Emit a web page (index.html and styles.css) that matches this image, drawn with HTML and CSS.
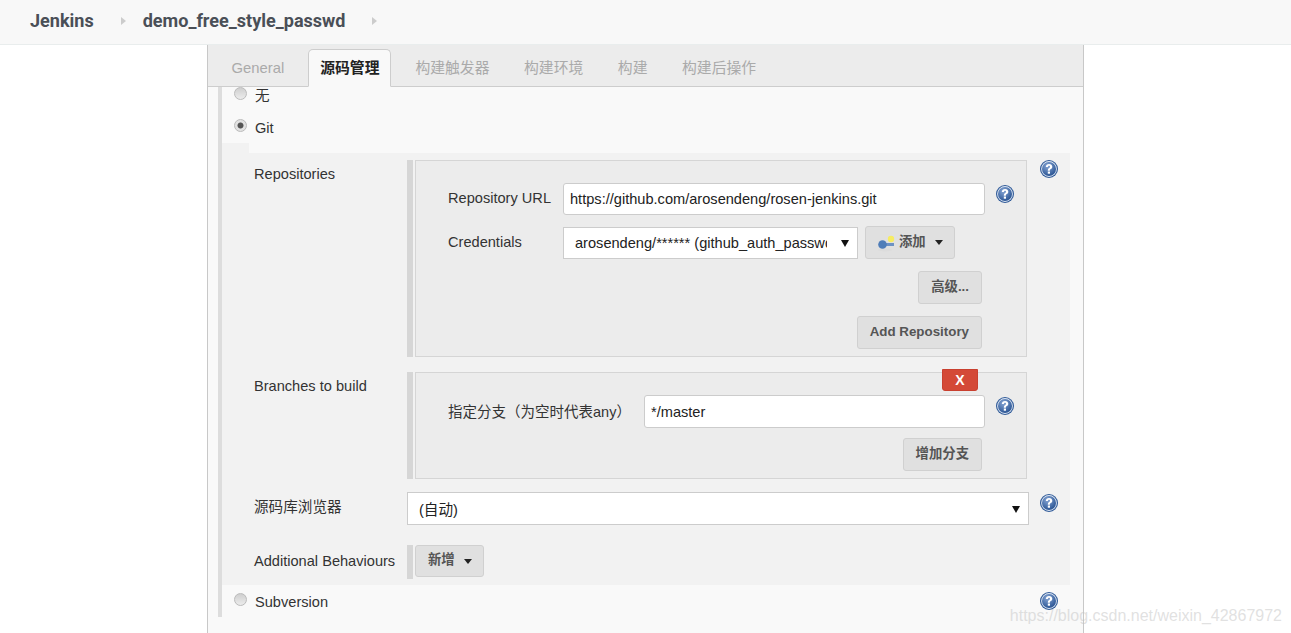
FILE: index.html
```html
<!DOCTYPE html>
<html lang="zh">
<head>
  <meta charset="UTF-8" />
  <title>demo_free_style_passwd Config [Jenkins]</title>
  <link rel="stylesheet" href="styles.css">
</head>
<body>

<svg class="defs" width="0" height="0">
  <defs>
    <radialGradient id="helpFill" cx="40%" cy="30%" r="80%">
      <stop offset="0" stop-color="#86a5d4"/>
      <stop offset="1" stop-color="#1f4b8c"/>
    </radialGradient>
    <symbol id="help" viewBox="0 0 18 18">
      <circle cx="9" cy="9" r="9" fill="#2f5a98"/>
      <circle cx="9" cy="9" r="7.9" fill="#dfe7f3"/>
      <circle cx="9" cy="9" r="7" fill="url(#helpFill)"/>
      <path d="M5.8 7c.1-2 1.4-3.1 3.3-3.1s3.2 1.1 3.2 2.8c0 1.2-.7 1.8-1.5 2.4-.7.5-.9.8-.9 1.6H7.8c0-1.4.4-2.1 1.3-2.7.6-.4.9-.7.9-1.2 0-.6-.4-1-1-1-.7 0-1.1.4-1.1 1.2z" fill="#fff"/>
      <rect x="7.8" y="11.5" width="2.2" height="2.2" fill="#fff"/>
    </symbol>
  </defs>
</svg>

<header class="topbar">
  <a class="crumb">Jenkins</a>
  <span class="crumb-arrow"></span>
  <a class="crumb">demo_free_style_passwd</a>
  <span class="crumb-arrow"></span>
</header>

<main class="panel">
  <nav class="tabs">
    <a class="tab first">General</a>
    <a class="tab active">源码管理</a>
    <a class="tab">构建触发器</a>
    <a class="tab">构建环境</a>
    <a class="tab">构建</a>
    <a class="tab">构建后操作</a>
  </nav>

  <section class="scm">
    <div class="radio-row first">
      <span class="radio"></span>
      <span class="radio-label">无</span>
    </div>
    <div class="radio-row">
      <span class="radio checked"></span>
      <span class="radio-label">Git</span>
    </div>

    <div class="notch"></div>
    <div class="git">
      <div class="row repos">
        <div class="row-label">Repositories</div>
        <div class="chunk">
          <div class="box">
            <div class="field">
              <label class="field-label">Repository URL</label>
              <input class="text" type="text" value="https://github.com/arosendeng/rosen-jenkins.git">
              <svg class="help"><use href="#help"/></svg>
            </div>
            <div class="field creds">
              <label class="field-label">Credentials</label>
              <div class="select-wrap short">
                <select class="select">
                  <option>arosendeng/****** (github_auth_passwd)</option>
                </select>
              </div>
              <button class="btn add">
                <svg class="key" viewBox="0 0 18 18">
                  <ellipse cx="8" cy="16" rx="7" ry="1.5" fill="#dcdcdc"/>
                  <circle cx="14" cy="5" r="3.2" fill="#f6ec62"/>
                  <rect x="7" y="9" width="10" height="3" fill="#6d92c4"/>
                  <circle cx="5.5" cy="10.5" r="4.3" fill="#4f7db8"/>
                </svg>
                <span class="btn-text">添加</span>
                <span class="caret"></span>
              </button>
            </div>
            <div class="actions">
              <button class="btn cjk">高级...</button>
            </div>
            <div class="actions">
              <button class="btn latin">Add Repository</button>
            </div>
          </div>
        </div>
        <svg class="help side"><use href="#help"/></svg>
      </div>

      <div class="row branches">
        <div class="row-label">Branches to build</div>
        <div class="chunk">
          <div class="box">
            <button class="btn-x">X</button>
            <div class="field">
              <label class="field-label wide">指定分支（为空时代表any）</label>
              <input class="text narrow" type="text" value="*/master">
              <svg class="help"><use href="#help"/></svg>
            </div>
            <div class="actions">
              <button class="btn cjk">增加分支</button>
            </div>
          </div>
        </div>
      </div>

      <div class="row browser">
        <div class="row-label">源码库浏览器</div>
        <div class="select-wrap full">
          <select class="select">
            <option>(自动)</option>
          </select>
        </div>
        <svg class="help side"><use href="#help"/></svg>
      </div>

      <div class="row behaviours">
        <div class="row-label">Additional Behaviours</div>
        <div class="chunk">
          <button class="btn add-new"><span class="btn-text">新增</span> <span class="caret"></span></button>
        </div>
      </div>
    </div>

    <div class="radio-row last">
      <span class="radio"></span>
      <span class="radio-label">Subversion</span>
      <svg class="help end"><use href="#help"/></svg>
    </div>
  </section>
</main>

<div class="watermark">https://blog.csdn.net/weixin_42867972</div>

</body>
</html>
```

FILE: styles.css
```css
* { box-sizing: border-box; }
html, body { height: 100%; }
body {
  margin: 0;
  background: #fff;
  color: #333;
  font-family: "Liberation Sans", "Noto Sans CJK SC", sans-serif;
  font-size: 14.6px;
  overflow: hidden;
}
.defs { position: absolute; }

.topbar {
  display: flex;
  align-items: center;
  height: 45px;
  padding: 0 0 4px 30px;
  background: #f8f8f8;
  border-bottom: 1px solid #e9eded;
}
.crumb {
  font-family: Roboto, "Liberation Sans", sans-serif;
  font-size: 18.05px;
  font-weight: 700;
  color: #4a4f57;
}
.crumb-arrow {
  width: 0;
  height: 0;
  margin: 1px 17px 0 27px;
  border-left: 5px solid #ccc;
  border-top: 4px solid transparent;
  border-bottom: 4px solid transparent;
}

.panel {
  width: 877px;
  height: 588px;
  margin-left: 207px;
  background: #f9f9f9;
  border-left: 1px solid #c8c8c8;
  border-right: 1px solid #c8c8c8;
}
.tabs {
  display: flex;
  align-items: flex-end;
  height: 42px;
  background: #ececec;
  border-bottom: 1px solid #cdcdcd;
}
.tab {
  padding: 0 12px 7px;
  margin-left: 10.6px;
  margin-bottom: -1px;
  color: #aaa;
  font-size: 14.8px;
  line-height: 24px;
}
.tab.first { margin-left: 11.6px; }
.tab.active {
  height: 38px;
  margin: 0 1.4px -1px 12px;
  padding: 6px 11px 0;
  background: #f9f9f9;
  border: 1px solid #cdcdcd;
  border-bottom: 1px solid #f9f9f9;
  border-radius: 5px 5px 0 0;
  color: #222;
  font-weight: 700;
}

.scm {
  height: 530px;
  margin-left: 10px;
  border-left: 4px solid #ddd;
}
.radio-row {
  display: flex;
  align-items: center;
  gap: 8px;
  height: 16px;
  margin-top: 16px;
  padding-left: 12px;
  line-height: 16px;
}
.radio-row.first { margin-top: 0; }
.radio-row.last { margin-top: 8px; position: relative; }
.radio-label { margin-top: 2px; }
.radio {
  width: 13px;
  height: 13px;
  border-radius: 50%;
  border: 1px solid #bbb;
  background: linear-gradient(#cfcfcf, #ececec);
  margin-top: -3px;
}
.radio.checked {
  background: radial-gradient(circle, #555 0 2.6px, #e2e2e2 3.4px);
}
.notch {
  width: 27px;
  height: 10px;
  margin-top: 8px;
  background: #f2f2f2;
}
.git {
  width: 848px;
  padding: 7px 0 6px;
  background: #f2f2f2;
}

.row {
  display: grid;
  grid-template-columns: 185px 622px 18px;
  align-items: start;
}
.row-label { padding: 6px 0 0 32px; line-height: 17px; }
.row.branches { margin-top: 15px; }
.row.browser { margin-top: 13px; }
.row.behaviours { margin-top: 20px; }
.row.behaviours .row-label { padding-top: 8px; }
.row.browser .row-label { padding-top: 7px; }
.row.browser .help.side { margin-top: 2px; }

.chunk {
  width: 620px;
  padding-left: 8px;
  background: linear-gradient(#d6d6d6, #d6d6d6) no-repeat left top / 6px 100%;
}
.row.behaviours .chunk { height: 34px; }
.box {
  position: relative;
  padding: 22px 44px 7px 32px;
  background: #ececec;
  border: 1px solid #d5d5d5;
}
.field {
  display: flex;
  align-items: center;
}
.field.creds { margin-top: 11px; height: 33px; }
.field-label { width: 115px; flex: none; margin-top: -2px; }
.field-label.wide { width: 196px; font-size: 14.5px; }
.text {
  width: 422px;
  height: 32px;
  padding: 0 6px;
  flex: none;
  font: inherit;
  color: #222;
  background: #fff;
  border: 1px solid #ccc;
  border-radius: 3px;
}
.text.narrow { width: 341px; height: 33px; }
.help {
  width: 18px;
  height: 18px;
  margin-left: 11px;
  flex: none;
  margin-top: -11px;
}
.help.side { margin: 0 0 0 11px; }
.help.end { position: absolute; left: 818px; top: -1px; margin: 0; }

.select-wrap { position: relative; flex: none; }
.select-wrap::after {
  content: "";
  position: absolute;
  right: 9px;
  top: 50%;
  margin-top: -3px;
  border-top: 7px solid #111;
  border-left: 4px solid transparent;
  border-right: 4px solid transparent;
}
.select-wrap.short { width: 295px; height: 32px; }
.select-wrap.full { width: 622px; height: 33px; }
.select-wrap.full .select { padding-top: 3px; }
.select {
  appearance: none;
  width: 100%;
  height: 100%;
  padding: 0 30px 0 11px;
  font: inherit;
  color: #222;
  background: #fff;
  border: 1px solid #ccc;
  border-radius: 0;
}

.btn {
  height: 33px;
  padding: 0 12px;
  font-family: inherit;
  font-size: 13.35px;
  font-weight: 700;
  color: #555;
  background: #e0e0e0;
  border: 1px solid #d0d0d0;
  border-radius: 3px;
  white-space: nowrap;
}
.btn.cjk { padding-bottom: 5px; }
.btn.latin { padding-bottom: 2px; }
.btn-text { margin-bottom: 5px; }
.btn.add {
  display: flex;
  align-items: center;
  width: 90px;
  margin-left: 7px;
  padding: 0 0 0 11px;
}
.btn.add-new { display: flex; align-items: center; gap: 9px; width: 69px; height: 32px; }
.key { width: 18px; height: 18px; margin-right: 4px; }
.caret {
  display: inline-block;
  margin-left: 9px;
  border-top: 5px solid #222;
  border-left: 4px solid transparent;
  border-right: 4px solid transparent;
}
.btn.add-new .caret { margin-left: 0; }
.actions {
  display: flex;
  justify-content: flex-end;
  margin-top: 12px;
}
.branches .actions { margin-top: 10px; }
.btn-x {
  position: absolute;
  top: -4px;
  right: 48px;
  width: 36px;
  height: 22px;
  padding: 0;
  font-family: inherit;
  font-size: 14px;
  font-weight: 700;
  color: #fff;
  background: #d44937;
  border: 1px solid #c9402f;
  border-radius: 0 0 3px 3px;
}

.watermark {
  position: absolute;
  right: 9px;
  top: 607px;
  font-size: 16px;
  color: rgba(195, 195, 195, 0.5);
}
```
